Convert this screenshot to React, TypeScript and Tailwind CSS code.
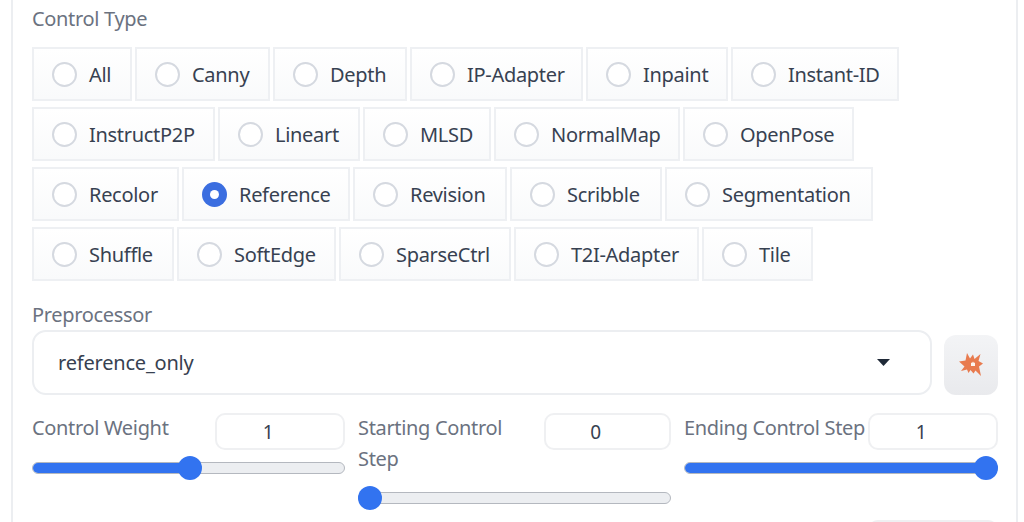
const font = "font-['Noto_Sans','Liberation_Sans',sans-serif]";

const rows = [
  [["All", "w-[100px]"], ["Canny", "w-[135px]"], ["Depth", "w-[134px]"], ["IP-Adapter", "w-[173px]"], ["Inpaint", "w-[142px]"], ["Instant-ID", "w-[168px]"]],
  [["InstructP2P", "w-[183px]"], ["Lineart", "w-[142px]"], ["MLSD", "w-[128px]"], ["NormalMap", "w-[186px]"], ["OpenPose", "w-[171px]"]],
  [["Recolor", "w-[147px]"], ["Reference", "w-[168px]"], ["Revision", "w-[154px]"], ["Scribble", "w-[152px]"], ["Segmentation", "w-[208px]"]],
  [["Shuffle", "w-[142px]"], ["SoftEdge", "w-[159px]"], ["SparseCtrl", "w-[172px]"], ["T2I-Adapter", "w-[185px]"], ["Tile", "w-[111px]"]],
];

function Radio({ label, width }: { label: string; width: string }) {
  const on = label === "Reference";
  return (
    <div className={`${width} h-[54px] flex items-center gap-[12px] pl-[18px] border-2 border-[#eef0f3] bg-gradient-to-b from-white to-[#f9fafb] text-[#374151] text-[20px] tracking-[-0.3px]`}>
      {on ? (
        <span className="w-[25px] h-[25px] rounded-full bg-[#3b6ee0] flex items-center justify-center shrink-0">
          <span className="w-[9px] h-[9px] rounded-full bg-white" />
        </span>
      ) : (
        <span className="w-[25px] h-[25px] rounded-full border-2 border-[#d5d9e0] bg-white shrink-0" />
      )}
      <span className="mt-[2px]">{label}</span>
    </div>
  );
}

function NumberBox({ width, value }: { width: string; value: string }) {
  return (
    <div className={`${width} h-[37px] rounded-[10px] border-2 border-[#eff0f2] bg-white flex items-center justify-center pr-[24px] pt-[2px] text-[#374151] text-[19px]`}>
      {value}
    </div>
  );
}

function Slider({ pct, thumb }: { pct: string; thumb: string }) {
  return (
    <div className="relative h-[12px] rounded-full bg-[#eceef1] border border-[#b4b8bf]">
      <div className={`${pct} h-full rounded-full bg-[#3273f0]`} />
      <div className={`absolute ${thumb} top-[-7px] w-[24px] h-[24px] rounded-full bg-[#3273f0]`} />
    </div>
  );
}

export default function App() {
  return (
    <div className={`${font} w-[1024px] h-[522px] overflow-hidden bg-white`}>
      <div className="ml-[11px] mr-[6px] h-[540px] border-x-2 border-[#eceef1] pl-[19px] pr-[18px]">
        <div className="h-[47px] pt-[5px] text-[#6b7280] text-[20px] leading-[28px] tracking-[-0.33px]">Control Type</div>
        <div className="flex flex-col gap-y-[6px]">
          {rows.map((row, i) => (
            <div key={i} className="flex gap-x-[3px]">
              {row.map(([label, width]) => (
                <Radio key={label} label={label} width={width} />
              ))}
            </div>
          ))}
        </div>
        <div className="mt-[20px] text-[#6b7280] text-[20px] leading-[28px] tracking-[-0.33px]">Preprocessor</div>
        <div className="flex items-end gap-[12px] mt-[1px]">
          <div className="flex-1 h-[65px] rounded-[14px] border-2 border-[#eceef1] bg-white flex items-center justify-between pl-[24px] pr-[40px] text-[#374151] text-[20px] tracking-[-0.2px]">
            <span>reference_only</span>
            <svg width="13" height="7" viewBox="0 0 13 7"><path d="M0 0H13L6.500 7Z" fill="#1f2937" /></svg>
          </div>
          <div className="w-[54px] h-[60px] rounded-[12px] bg-gradient-to-b from-[#f3f4f6] to-[#e9eaed] flex items-center justify-center">
            <svg width="24" height="24" viewBox="0 0 24 24">
              <path d="M8 0L11 5.500 14 1.500 15.500 6 21.500 1 19.500 8 24 10.500 20 13.500 22 23 16.500 17.500 14.500 20.500 11.500 17 9.500 20 8 16.500 2 18 5.500 13.500 0 8.500 6.500 7.500Z" fill="#e87b4f" />
              <path d="M12 9.500L13 10 14 8.500 15 10 16 9.500 16 13 12 13Z" fill="#fdf5f0" />
            </svg>
          </div>
        </div>
        <div className="grid grid-cols-[313px_313px_314px] gap-x-[13px] mt-[18px] text-[#6b7280] text-[20px] leading-[31px] tracking-[-0.33px]">
          <div>
            <div className="flex justify-between items-start h-[49px]">
              <span className="mt-[-1px]">Control Weight</span>
              <NumberBox width="w-[130px]" value="1" />
            </div>
            <Slider pct="w-[50%]" thumb="left-[145px]" />
          </div>
          <div>
            <div className="flex justify-between items-start h-[79px]">
              <span className="w-[170px] mt-[-1px]">Starting Control Step</span>
              <NumberBox width="w-[127px]" value="0" />
            </div>
            <Slider pct="w-[1%]" thumb="left-[-1px]" />
          </div>
          <div>
            <div className="flex justify-between items-start h-[49px]">
              <span className="whitespace-nowrap mt-[-1px]">Ending Control Step</span>
              <NumberBox width="w-[130px]" value="1" />
            </div>
            <Slider pct="w-full" thumb="right-[-1px]" />
          </div>
        </div>
        <div className="flex justify-end mt-[16px]">
          <div className="w-[130px] h-[30px] rounded-[10px] border-2 border-[#eff0f2]" />
        </div>
      </div>
    </div>
  );
}
